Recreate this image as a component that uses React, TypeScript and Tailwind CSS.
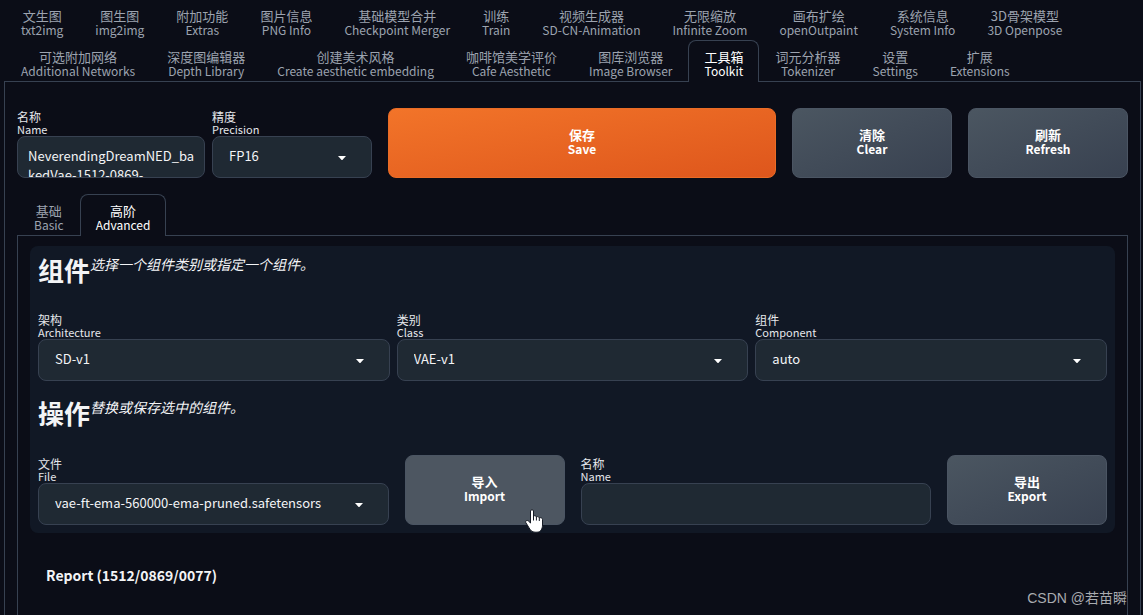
import type { ReactNode } from "react";
import clsx from "clsx";

type Pair = { zh: string; en: string };

const firstRow: Pair[] = [
  { zh: "文生图", en: "txt2img" },
  { zh: "图生图", en: "img2img" },
  { zh: "附加功能", en: "Extras" },
  { zh: "图片信息", en: "PNG Info" },
  { zh: "基础模型合并", en: "Checkpoint Merger" },
  { zh: "训练", en: "Train" },
  { zh: "视频生成器", en: "SD-CN-Animation" },
  { zh: "无限缩放", en: "Infinite Zoom" },
  { zh: "画布扩绘", en: "openOutpaint" },
  { zh: "系统信息", en: "System Info" },
  { zh: "3D骨架模型", en: "3D Openpose" },
];

const secondRow: Pair[] = [
  { zh: "可选附加网络", en: "Additional Networks" },
  { zh: "深度图编辑器", en: "Depth Library" },
  { zh: "创建美术风格", en: "Create aesthetic embedding" },
  { zh: "咖啡馆美学评价", en: "Cafe Aesthetic" },
  { zh: "图库浏览器", en: "Image Browser" },
  { zh: "工具箱", en: "Toolkit" },
  { zh: "词元分析器", en: "Tokenizer" },
  { zh: "设置", en: "Settings" },
  { zh: "扩展", en: "Extensions" },
];

function Tab({ zh, en, active }: Pair & { active?: boolean }) {
  return (
    <button
      type="button"
      role="tab"
      aria-selected={!!active}
      className={clsx(
        "flex shrink-0 flex-col items-center rounded-t-lg border border-b-0 px-[15px] pt-[9px] whitespace-nowrap",
        active
          ? "relative -mb-px h-[42px] border-[#374151] bg-[#0b0d17] text-white"
          : "h-[41px] border-transparent text-[#9ca3af]",
      )}
    >
      <span className="text-[13px] leading-[14px]">{zh}</span>
      <span className="text-[12px] leading-[14px]">{en}</span>
    </button>
  );
}

function Field({ id, zh, en, className, children }: Pair & { id: string; className?: string; children: ReactNode }) {
  return (
    <div className={clsx("flex min-w-0 flex-col", className)}>
      <label htmlFor={id} className="flex flex-col pt-[3px] pb-px text-[#e5e7eb]">
        <span className="text-[12px] leading-[12px]">{zh}</span>
        <span className="text-[11px] leading-[12px]">{en}</span>
      </label>
      {children}
    </div>
  );
}

function Select({ id, value }: { id: string; value: string }) {
  return (
    <div className="relative">
      <select
        id={id}
        defaultValue={value}
        className="block h-[42px] w-full appearance-none rounded-lg border border-[#374151] bg-[#1f2933] px-4 pb-0.5 text-[13px] leading-5 text-[#f3f4f6]"
      >
        <option>{value}</option>
      </select>
      <svg viewBox="0 0 8 4" className="pointer-events-none absolute top-5 right-[26px] h-1 w-2 fill-white" aria-hidden="true">
        <path d="M0 0h8L4.6 3.7a.9.9 0 0 1-1.2 0z" />
      </svg>
    </div>
  );
}

const tones = {
  primary: "border-[#ea6c26] bg-linear-to-br from-[#f27429] to-[#de561c]",
  secondary: "border-[#4b5563] bg-linear-to-br from-[#4b5661] to-[#384150]",
  hovered: "border-[#4b5563] bg-[#4d5661]",
};

function ActionButton({ zh, en, tone, className }: Pair & { tone: keyof typeof tones; className?: string }) {
  return (
    <button
      type="button"
      className={clsx(
        "flex h-[70px] flex-col items-center justify-center rounded-lg border pb-0.5 font-bold text-white",
        tones[tone],
        className,
      )}
    >
      <span className="text-[13px] leading-[14px]">{zh}</span>
      <span className="text-[12px] leading-[14px]">{en}</span>
    </button>
  );
}

function SectionTitle({ title, note }: { title: string; note: string }) {
  return (
    <div className="flex h-[50px] items-start text-[#f3f4f6]">
      <h1 className="text-[26px] leading-8 font-bold">{title}</h1>
      <em className="text-[14px] leading-5">{note}</em>
    </div>
  );
}

function HandCursor() {
  return (
    <svg viewBox="0 0 18 24" className="pointer-events-none absolute right-[22px] -bottom-2 h-6 w-[18px]" aria-hidden="true">
      <path
        d="M5.5 2C5.5.3 8.5.3 8.5 2V7C9.4 6.4 11.2 6.7 11.4 7.9C12.4 7.3 14.1 7.7 14.3 8.9C15.6 8.3 17.5 8.9 17.5 10.5V16C17.5 20 15.6 23.2 12 23.2H10C7 23.2 5.2 21 3.8 18.4L.8 13.6C0 12 2 10.7 3.4 12L5.5 14Z"
        fill="#fff"
        stroke="#151a24"
        strokeWidth="1"
        strokeLinejoin="round"
      />
      <path d="M8.5 7V11.5M11.4 7.9V11.5M14.3 8.9V12" stroke="#151a24" strokeWidth="1" />
    </svg>
  );
}

export default function App() {
  return (
    <div className="relative flex h-screen flex-col overflow-hidden bg-[#0b0d17] pr-0.5 pl-1 font-['Noto_Sans_CJK_SC',sans-serif]">
      <nav role="tablist" aria-label="Main" className="-mt-px shrink-0 pl-px">
        <div className="flex">
          {firstRow.map((t) => (
            <Tab key={t.en} {...t} />
          ))}
        </div>
        <div className="flex">
          {secondRow.map((t) => (
            <Tab key={t.en} {...t} active={t.en === "Toolkit"} />
          ))}
        </div>
      </nav>

      <main className="flex flex-1 flex-col border border-b-0 border-[#374151] px-3 pt-[26px]">
        <div className="flex gap-4">
          <div className="flex w-[355px] shrink-0 gap-[7px]">
            <Field id="model-name" zh="名称" en="Name" className="flex-1">
              <textarea
                id="model-name"
                defaultValue="NeverendingDreamNED_bakedVae-1512-0869-"
                className="block h-[42px] w-full resize-none overflow-hidden rounded-lg border border-[#374151] bg-[#1f2933] pt-[9px] pr-1 pl-2.5 text-[13px] leading-[19px] text-[#f3f4f6]"
              />
            </Field>
            <Field id="precision" zh="精度" en="Precision" className="w-40">
              <Select id="precision" value="FP16" />
            </Field>
          </div>
          <ActionButton zh="保存" en="Save" tone="primary" className="flex-1" />
          <ActionButton zh="清除" en="Clear" tone="secondary" className="w-40" />
          <ActionButton zh="刷新" en="Refresh" tone="secondary" className="w-40" />
        </div>

        <div role="tablist" aria-label="Mode" className="mt-4 flex pl-px">
          <Tab zh="基础" en="Basic" />
          <Tab zh="高阶" en="Advanced" active />
        </div>

        <div className="flex-1 border border-b-0 border-[#374151] px-3 pt-2.5">
          <section className="rounded-lg bg-[#111825] p-2">
            <SectionTitle title="组件" note="选择一个组件类别或指定一个组件。" />
            <div className="mt-[7px] grid grid-cols-3 gap-[7px]">
              <Field id="architecture" zh="架构" en="Architecture">
                <Select id="architecture" value="SD-v1" />
              </Field>
              <Field id="class" zh="类别" en="Class">
                <Select id="class" value="VAE-v1" />
              </Field>
              <Field id="component" zh="组件" en="Component">
                <Select id="component" value="auto" />
              </Field>
            </div>
            <div className="mt-4">
              <SectionTitle title="操作" note="替换或保存选中的组件。" />
            </div>
            <div className="mt-2 flex gap-4">
              <Field id="file" zh="文件" en="File" className="flex-1">
                <Select id="file" value="vae-ft-ema-560000-ema-pruned.safetensors" />
              </Field>
              <div className="relative">
                <ActionButton zh="导入" en="Import" tone="hovered" className="w-40" />
                <HandCursor />
              </div>
              <Field id="export-name" zh="名称" en="Name" className="flex-1">
                <input
                  id="export-name"
                  type="text"
                  className="h-[42px] w-full rounded-lg border border-[#374151] bg-[#1f2933] px-2.5 text-[13px] text-[#f3f4f6]"
                />
              </Field>
              <ActionButton zh="导出" en="Export" tone="secondary" className="w-40" />
            </div>
          </section>
          <h3 className="mt-8 px-4 text-[14px] leading-5 font-bold text-[#f3f4f6]">Report (1512/0869/0077)</h3>
        </div>
      </main>

      <p className="absolute right-4 bottom-[7px] font-['Liberation_Sans','Noto_Sans_CJK_SC',sans-serif] text-[14px] leading-5 text-[#a9abb0]">
        CSDN @若苗瞬
      </p>
    </div>
  );
}
